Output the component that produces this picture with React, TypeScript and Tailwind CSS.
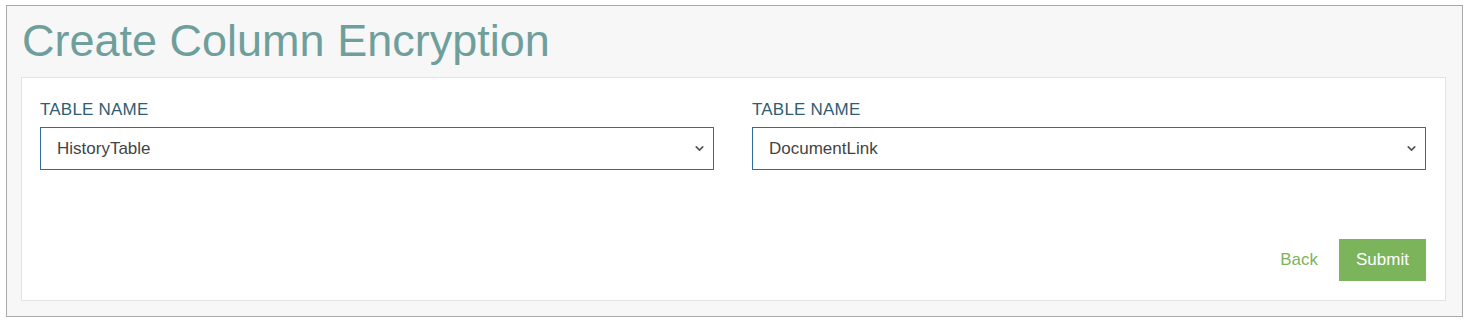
import { ChevronDown } from "lucide-react";

const tables = [
  { label: "TABLE NAME", value: "HistoryTable" },
  { label: "TABLE NAME", value: "DocumentLink" },
];

export default function App() {
  return (
    <div className="min-h-[323px] bg-white pt-[5px] px-[6px] font-['Liberation_Sans',Arial,sans-serif]">
      <div className="w-[1457px] h-[312px] bg-[#f7f7f7] border border-[#a9a9a9] pl-[14px] pr-[16px]">
        <h1 className="text-[45px] leading-none text-[#6f9f9c] pt-[12px] pb-[14px] pl-px">
          Create Column Encryption
        </h1>
        <div className="h-[224px] bg-white border border-[#e3e3e3] pl-[18px] pr-[19px] pt-[22px] flex flex-col">
          <div className="grid grid-cols-2 gap-x-[38px]">
            {tables.map((t, i) => (
              <div key={i}>
                <label className="block text-[17px] leading-5 text-[#2f5d73] mb-[7px] tracking-[0.2px]">{t.label}</label>
                <div className="h-[43px] border border-[#2d6e9e] flex items-center justify-between pl-[16px] pr-[7px] text-[17px] text-[#444]">
                  <span>{t.value}</span>
                  <ChevronDown className="w-[13px] h-[13px] text-[#555]" strokeWidth={3} />
                </div>
              </div>
            ))}
          </div>
          <div className="mt-auto mb-[19px] flex justify-end items-center gap-[21px]">
            <button className="text-[17px] text-[#7db35e]">Back</button>
            <button className="w-[87px] h-[42px] bg-[#7cb45c] text-white text-[17px]">Submit</button>
          </div>
        </div>
      </div>
    </div>
  );
}
